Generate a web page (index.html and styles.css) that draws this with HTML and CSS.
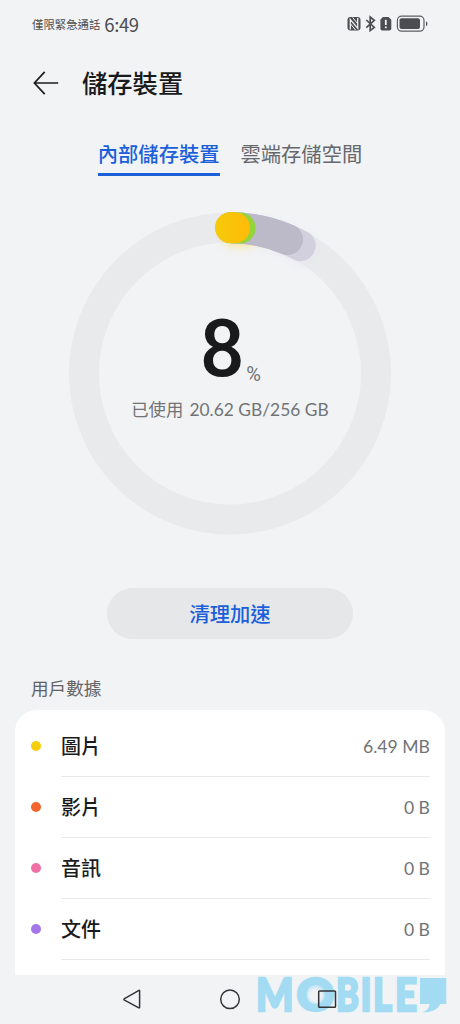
FILE: index.html
```html
<!DOCTYPE html>
<html lang="zh-Hant">
<head>
<meta charset="utf-8">
<title>儲存裝置</title>
<link rel="stylesheet" href="styles.css">
</head>
<body>
<div class="screen">
  <header class="status">
    <div class="status-left"><span class="carrier">僅限緊急通話</span><span class="clock">6:49</span></div>
    <svg class="status-icons" width="82" height="18" viewBox="347 15 82 18" fill="none">
      <rect x="348.5" y="17" width="13" height="13.5" rx="3" fill="#4c4d50"/>
      <path d="M351.3 29.5V19.5L358.7 28.3V18" stroke="#f1f3f5" stroke-width="1.3"/>
      <path d="M353.7 17.5L358.5 23.5M351.7 24L356.5 30" stroke="#f1f3f5" stroke-width="1"/>
      <path d="M367.3 20L375.3 27.4L371.2 30.6V17L375.3 20.3L367.3 27.6" stroke="#4c4d50" stroke-width="1.7"/>
      <path d="M384 17H389.5L392.3 19.8V28.6Q392.3 30.5 390.4 30.5H383.3Q381.4 30.5 381.4 28.6V19.6Z" fill="#4c4d50"/>
      <path d="M386.8 19.8V25M386.8 26.5V28.2" stroke="#f1f3f5" stroke-width="1.8"/>
      <rect x="398.4" y="16.2" width="26.6" height="15" rx="4.2" stroke="#5d5e61" stroke-width="1.2"/>
      <rect x="400.5" y="18.3" width="20.5" height="10.8" rx="2" fill="#4c4d50"/>
      <path d="M427 21.5Q428.4 21.5 428.4 23.7T427 26Z" fill="#4c4d50"/>
    </svg>
  </header>
  <div class="titlebar">
    <svg width="26" height="24" viewBox="0 0 26 24" fill="none" stroke="#1b1c1e" stroke-width="1.7"><path d="M11.7 .8L1.4 12L11.7 23.2M1.4 12H25.2"/></svg>
    <h1 class="title">儲存裝置</h1>
  </div>
  <nav class="tabs"><span class="tab active">內部儲存裝置</span><span class="tab">雲端存儲空間</span></nav>
  <section class="gauge">
    <svg class="ring" width="322" height="328" viewBox="69 211 322 328" fill="none">
      <defs>
        <filter id="glow" filterUnits="userSpaceOnUse" x="180" y="190" width="170" height="110"><feGaussianBlur stdDeviation="4"/></filter>
        <linearGradient id="amber" gradientUnits="userSpaceOnUse" x1="215" x2="250" y1="0" y2="0"><stop stop-color="#f5cb0b"/><stop offset="1" stop-color="#ffba08"/></linearGradient>
      </defs>
      <circle cx="230" cy="373.5" r="146" stroke="#e9eaec" stroke-width="30"/>
      <path d="M260 232A146 146 0 0 1 312 257" stroke="#e7e5ef" stroke-opacity=".75" stroke-width="28" filter="url(#glow)"/>
      <path d="M235 235H246" stroke="#ffdf80" stroke-opacity=".6" stroke-width="26" stroke-linecap="round" filter="url(#glow)"/>
      <g stroke-width="31" stroke-linecap="round">
        <path d="M231 227.7A146 146 0 0 1 300.2 245.6" stroke="#d3d0de"/>
        <path d="M231 227.7A146 146 0 0 1 287.5 239.5" stroke="#bcb9c9"/>
        <path d="M231 227.7A146 146 0 0 1 240 228" stroke="#93d43a"/>
        <path d="M230.5 227.7A146 146 0 0 1 234.5 227.8" stroke="url(#amber)"/>
      </g>
    </svg>
    <div class="readout">
      <div class="percent"><span class="number">8</span><span class="unit">%</span></div>
      <div class="used"><span>已使用</span><span class="amount">20.62 GB/256 GB</span></div>
    </div>
  </section>
  <button class="clean">清理加速</button>
  <h2 class="group">用戶數據</h2>
  <ul class="list">
    <li class="item"><i class="dot yellow"></i><div class="line"><span>圖片</span><span class="size">6.49 MB</span></div></li>
    <li class="item"><i class="dot orange"></i><div class="line"><span>影片</span><span class="size">0 B</span></div></li>
    <li class="item"><i class="dot pink"></i><div class="line"><span>音訊</span><span class="size">0 B</span></div></li>
    <li class="item"><i class="dot purple"></i><div class="line"><span>文件</span><span class="size">0 B</span></div></li>
  </ul>
  <footer class="nav">
    <svg width="460" height="49" viewBox="0 975 460 49" fill="none">
      <circle cx="315.5" cy="995.2" r="13.5" fill="#c5e7f4" class="soft"/>
      <circle cx="315.5" cy="995.2" r="7.5" fill="#f1f3f5" class="soft"/>
      <g class="watermark" fill="#a3dcf2">
        <text y="1010.8" x="256" textLength="37.5" lengthAdjust="spacingAndGlyphs">M</text>
        <text y="1010.8" x="296.5" textLength="38" lengthAdjust="spacingAndGlyphs">O</text>
        <text y="1010.8" x="336" textLength="23" lengthAdjust="spacingAndGlyphs">B</text>
        <text y="1010.8" x="360.5" textLength="11" lengthAdjust="spacingAndGlyphs">I</text>
        <text y="1010.8" x="373" textLength="19" lengthAdjust="spacingAndGlyphs">L</text>
        <text y="1010.8" x="395" textLength="22" lengthAdjust="spacingAndGlyphs">E</text>
        <path d="M420 978H446.3V1004H440.5Q436 1012.6 422.5 1012.5Q429.5 1009.5 429.5 1004H420Z"/>
      </g>
      <g stroke="#333437" stroke-width="1.5" stroke-linejoin="round">
        <path d="M139 990.3Q139.6 990 139.6 991V1007Q139.6 1008.4 138.4 1007.7L124.5 1000.2Q123.3 999.4 124.5 998.7Z"/>
        <circle cx="230" cy="999.3" r="9.3"/>
        <rect x="318.7" y="990.9" width="16.8" height="16.4" rx=".8"/>
      </g>
    </svg>
  </footer>
</div>
</body>
</html>
```
FILE: styles.css
```css
* { box-sizing: border-box; }
body { margin: 0; background: #f1f3f5; color: #191a1c; font-family: Lato, "Noto Sans CJK TC", sans-serif; }
.screen { width: 460px; height: 1024px; overflow: hidden; display: flex; flex-direction: column; }
.status { height: 48px; flex: none; padding: 0 32px 0 32px; display: flex; align-items: center; justify-content: space-between; color: #4c4d50; }
.status-left { display: flex; align-items: center; gap: 4px; }
.carrier { font-size: 11.4px; }
.clock { font-family: "Noto Sans CJK TC", sans-serif; font-size: 18.5px; line-height: 24px; letter-spacing: -.4px; }
.titlebar { height: 70px; flex: none; display: flex; align-items: center; gap: 23px; padding-left: 33px; }
.title { margin: 0; font-size: 25.3px; line-height: 36px; font-weight: 500; }
.tabs { height: 58px; flex: none; padding-top: 19px; display: flex; justify-content: center; gap: 21px; }
.tab { font-size: 20.3px; line-height: 34px; height: 39px; color: #67686b; }
.tab.active { color: #1c5fdb; font-weight: 500; border-bottom: 3px solid #1c5fdb; }
.gauge { height: 363px; flex: none; padding-top: 35px; display: grid; justify-items: center; align-items: start; }
.ring, .readout { grid-area: 1 / 1; }
.readout { padding-top: 100px; text-align: center; }
.percent { height: 81px; display: flex; justify-content: center; align-items: flex-start; gap: 3px; }
.number { font: 500 79px/77px Roboto, sans-serif; width: 44px; letter-spacing: -2px; }
.unit { font: 20px/24px Roboto, sans-serif; color: #727376; padding-top: 51px; }
.used { font-size: 17.4px; line-height: 36px; color: #727376; display: flex; justify-content: center; gap: 6px; white-space: nowrap; }
.clean { width: 246px; height: 51px; margin: 49px auto 0; flex: none; border: 0; border-radius: 26px; background: #e6e7e9; color: #1c5fdb; font: 500 20.3px/49px "Noto Sans CJK TC", sans-serif; padding: 0 0 1px; }
.group { margin: 0; height: 71px; flex: none; padding: 37px 0 0 31px; font-size: 17.6px; line-height: 26px; font-weight: 400; color: #626366; }
.list { margin: 0 15px; padding: 0; flex: 1; min-height: 0; background: #fff; border-radius: 22px 22px 0 0; list-style: none; padding-top: 6px; }
.item { height: 61px; padding: 0 15px 0 16px; display: flex; align-items: center; gap: 20px; }
.dot { width: 10px; height: 10px; border-radius: 50%; margin-bottom: 2px; }
.yellow { background: #f4ce0b; }
.orange { background: #f3652f; }
.pink { background: #f26ea7; }
.purple { background: #a377e8; }
.line { flex: 1; height: 61px; border-bottom: 1px solid #e8e9eb; padding-bottom: 1px; display: flex; align-items: center; justify-content: space-between; font-size: 20px; font-weight: 500; }
.size { font-size: 17.6px; font-weight: 400; color: #727376; padding-top: 2px; }
.nav { height: 49px; flex: none; }
.nav svg { display: block; overflow: visible; }
.watermark text { font: 900 45px/1 Lato, sans-serif; stroke: #a3dcf2; stroke-width: 2.4px; }
.soft { filter: blur(1.5px); }
```
